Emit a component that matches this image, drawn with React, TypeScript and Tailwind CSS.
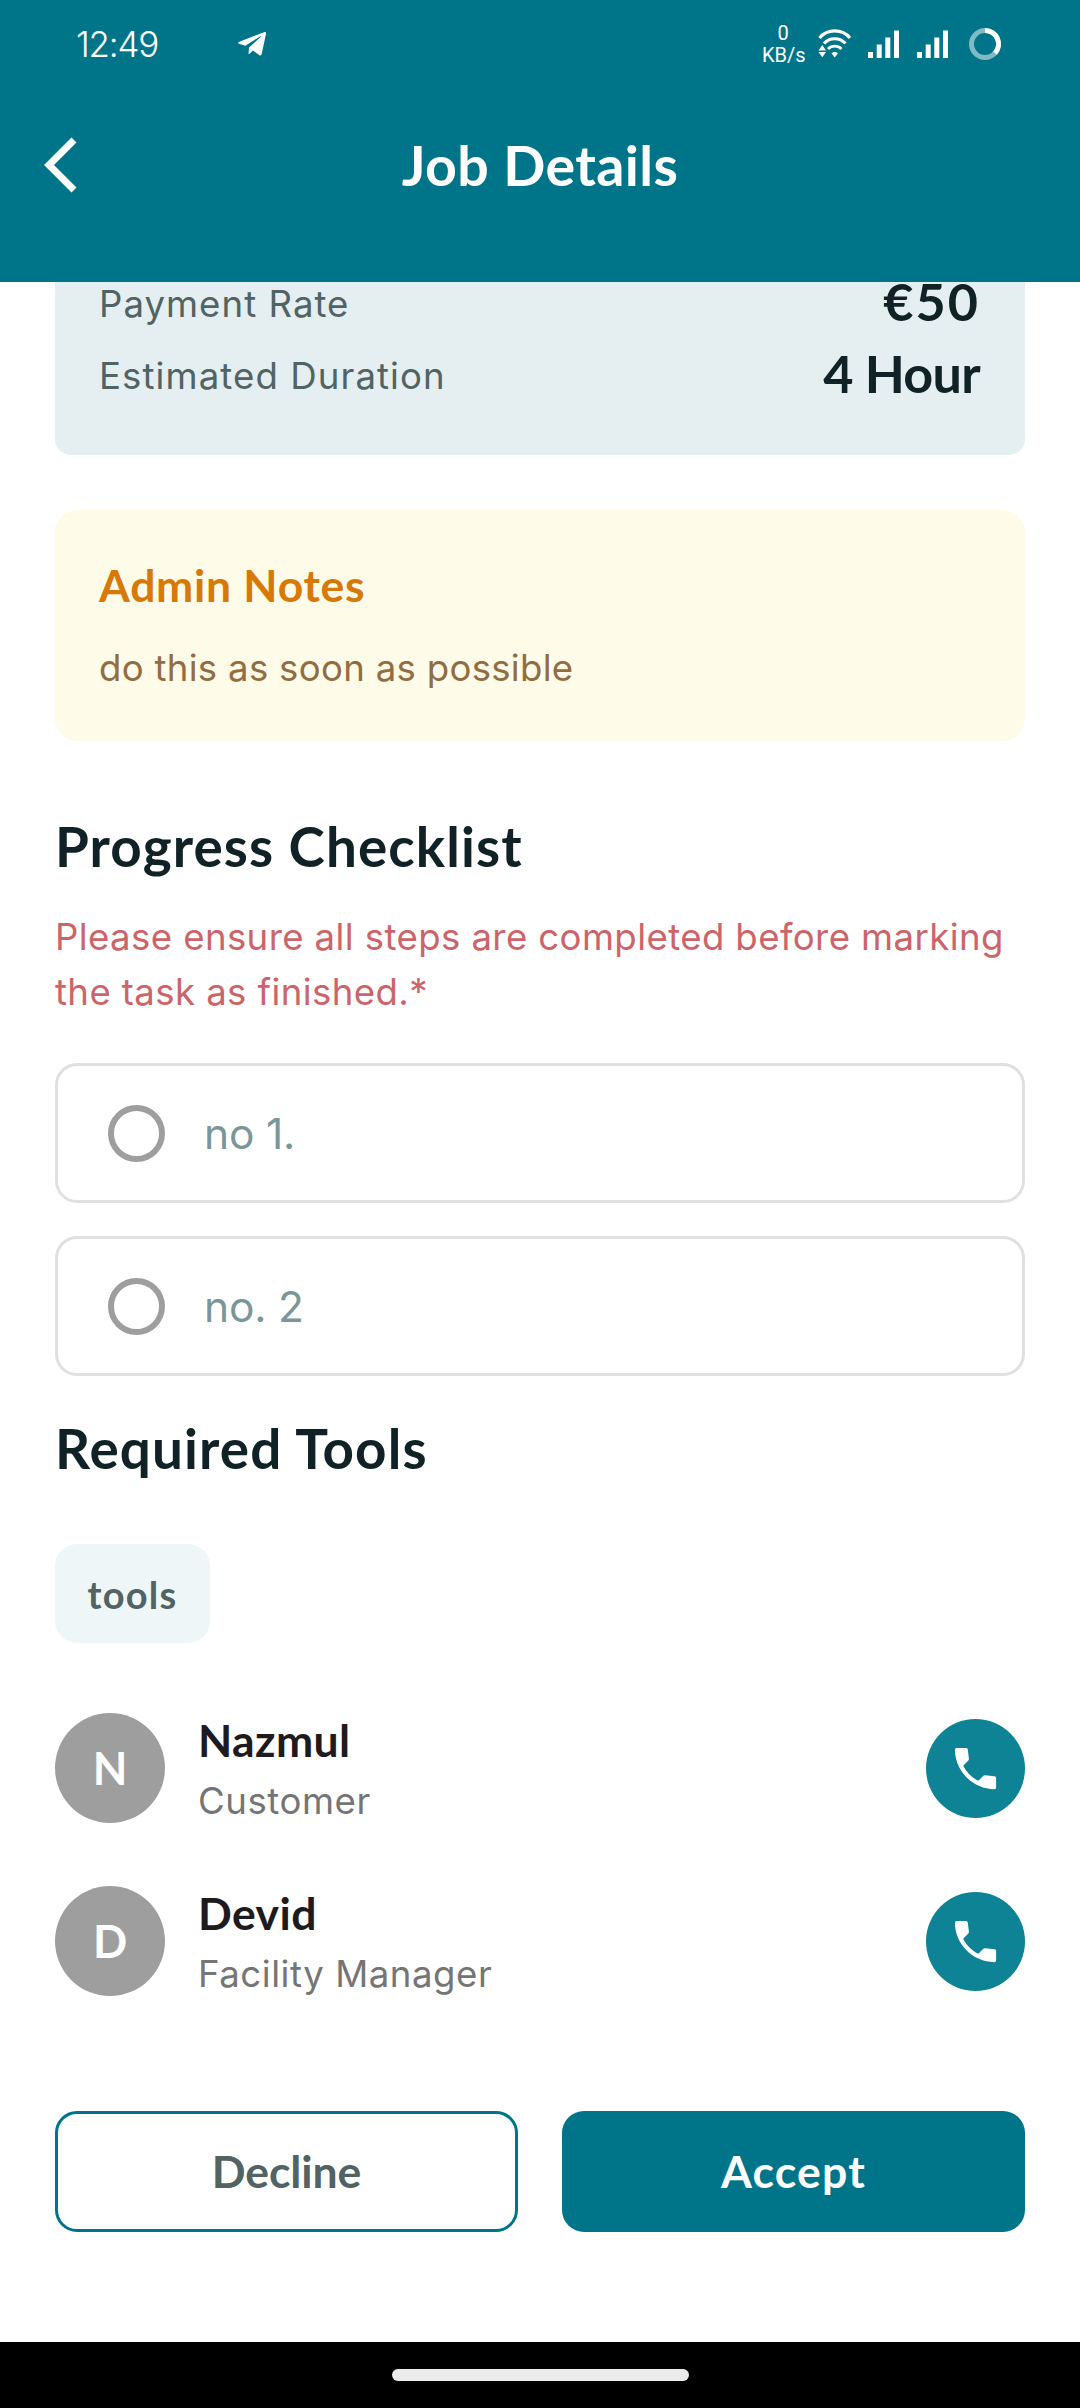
import React from "react";
import { FaTelegramPlane } from "react-icons/fa";

const display = "font-['Lato',sans-serif] font-bold";
const body = "font-['Inter',sans-serif] font-normal";

function WifiIcon() {
  return (
    <svg width="34" height="30" viewBox="0 0 34 30" fill="none" stroke="white" strokeWidth="3.2">
      <path d="M1.5 9 A20 20 0 0 1 32 9" />
      <path d="M6 14.5 A14.5 14.5 0 0 1 27.5 14.5" />
      <path d="M10 20 A9.5 9.5 0 0 1 23.5 20" strokeWidth="2.8" />
      <path d="M13.5 24.3 Q16.7 21.5 20 24.3 L16.7 28.5 Z" fill="white" stroke="none" />
      <path d="M0.5 21.5 L4.3 16 L8 21.5 Z M0.5 23 L4.3 28.3 L8 23 Z" fill="white" stroke="none" />
    </svg>
  );
}

function SignalIcon() {
  return (
    <svg width="32" height="28" viewBox="0 0 32 28" fill="white">
      <rect x="0" y="22" width="5" height="6" />
      <rect x="8.7" y="14.5" width="5" height="13.5" />
      <rect x="17.3" y="7.5" width="5" height="20.5" />
      <rect x="26" y="0.5" width="5" height="27.5" />
    </svg>
  );
}

function BatteryRing() {
  return (
    <svg width="34" height="34" viewBox="-17 -17 34 34" fill="none" strokeWidth="5">
      <circle r="13.5" stroke="white" strokeOpacity="0.5" />
      <path d="M0 -13.5 A13.5 13.5 0 0 1 10 9.1" stroke="white" />
    </svg>
  );
}

function StatusBar() {
  return (
    <div className="flex h-[88px] items-center">
      <span className="ml-[76px] w-[160px] font-['Inter',sans-serif] text-[35px] font-light leading-[90px] tracking-[-1.2px]">12:49</span>
      <FaTelegramPlane className="size-8" />
      <div className="mr-[78px] ml-auto flex items-center">
        <div className="mr-3.5 w-[42px] text-center font-['Roboto',sans-serif] text-[20px] leading-[22px]">
          <div>0</div>
          <div className="whitespace-nowrap">KB/s</div>
        </div>
        <WifiIcon />
        <div className="ml-4 flex gap-[17px]">
          <SignalIcon />
          <SignalIcon />
        </div>
        <div className="ml-[19px]">
          <BatteryRing />
        </div>
      </div>
    </div>
  );
}

function Header() {
  return (
    <header className="h-[282px] bg-[#007589] text-white">
      <StatusBar />
      <div className="grid h-[154px] grid-cols-[1fr_auto_1fr] items-center">
        <svg className="ml-11" width="34" height="56" viewBox="0 0 34 56" fill="none" stroke="white" strokeWidth="7">
          <path d="M30 3 L5 28 L30 53" />
        </svg>
        <h1 className={`${display} text-[55.5px] leading-[62px] tracking-[0.4px]`}>Job Details</h1>
      </div>
    </header>
  );
}

function RateCard() {
  return (
    <section className="h-[173px] rounded-b-[16px] bg-[#e5eef1] pr-[45px] pl-11 text-[#526363]">
      <div className="flex h-14 items-start justify-between">
        <span className={`${body} text-[36.6px] leading-[45px] tracking-[1.04px]`}>Payment Rate</span>
        <span className={`${display} text-[52.1px] leading-[38px] tracking-[2px] text-[#102226]`}>€50</span>
      </div>
      <div className="flex items-start justify-between">
        <span className={`${body} text-[36.6px] leading-[77px] tracking-[1.1px]`}>Estimated Duration</span>
        <span className={`${display} text-[52.1px] leading-[71px] tracking-[-0.7px] text-[#102226]`}>4 Hour</span>
      </div>
    </section>
  );
}

function AdminNotes() {
  return (
    <section className="mt-[55px] h-[231px] rounded-[22px] bg-[#fffbe9] pt-[46px] pl-11">
      <h2 className={`${display} text-[44.5px] leading-[58px] tracking-[0.7px] text-[#d77907]`}>Admin Notes</h2>
      <p className={`${body} mt-6 text-[36.6px] leading-[60px] tracking-[0.3px] text-[#926d42]`}>do this as soon as possible</p>
    </section>
  );
}

function ChecklistItem({ label }: { label: string }) {
  return (
    <label className="flex h-[140px] items-center rounded-[22px] border-[3px] border-[#e0e0e0] pl-[50px]">
      <span className="size-[57px] rounded-full border-[6px] border-[#9e9e9e]" />
      <span className={`${body} ml-[39px] pt-px text-[42.5px] leading-[60px] tracking-[-0.2px] text-[#7b9699]`}>{label}</span>
    </label>
  );
}

function PhoneIcon() {
  return (
    <svg width="55" height="55" viewBox="0 0 24 24" fill="white">
      <path d="M20.3 15.38l-4.1-.48q-.45-.05-.75.25l-2.24 2.22c-2.83-1.44-5.15-3.75-6.59-6.59l2.25-2.25q.3-.3.25-.75l-.48-4.1Q8.56 3 7.9 3H3.75Q3 3 3.01 3.75C3.03 13.2 10.8 20.97 20.25 21q.75 0 .75-.75v-4.1q0-.7-.7-.77z" />
    </svg>
  );
}

function Contact({ name, role }: { name: string; role: string }) {
  return (
    <div className="flex h-[110px] items-center">
      <div className={`${display} flex size-[110px] items-center justify-center rounded-full bg-[#9e9e9e] pt-0.5 text-[45px] text-white`}>{name[0]}</div>
      <div className="ml-[33px] pt-2">
        <div className={`${display} text-[44.5px] leading-[58px] tracking-[0.4px] text-[#1d1b20]`}>{name}</div>
        <div className={`${body} text-[36.6px] leading-[64px] tracking-[0.55px] text-[#757575]`}>{role}</div>
      </div>
      <button className="ml-auto flex size-[99px] items-center justify-center rounded-full bg-[#0d8395]">
        <PhoneIcon />
      </button>
    </div>
  );
}

export default function App() {
  return (
    <div className="flex h-[2408px] w-[1080px] flex-col overflow-hidden bg-white">
      <Header />
      <main className="flex flex-1 flex-col px-[55px]">
        <RateCard />
        <AdminNotes />
        <h2 className={`${display} mt-[75px] text-[54.8px] leading-[60px] tracking-[1.1px] text-[#102226]`}>Progress Checklist</h2>
        <p className={`${body} mt-[34px] text-[36.6px] leading-[55px] tracking-[0.4px] text-[#cd6469]`}>
          Please ensure all steps are completed before marking the task as finished.*
        </p>
        <div className="mt-[43px] flex flex-col gap-[33px]">
          <ChecklistItem label="no 1." />
          <ChecklistItem label="no. 2" />
        </div>
        <h2 className={`${display} mt-[42px] text-[54.8px] leading-[60px] tracking-[1.1px] text-[#102226]`}>Required Tools</h2>
        <div className="mt-[66px] flex">
          <span className={`${display} flex h-[99px] w-[155px] items-center justify-center rounded-[22px] bg-[#eff6f8] pt-px text-[38px] tracking-[1.2px] text-[#526363]`}>tools</span>
        </div>
        <div className="mt-[70px] flex flex-col gap-[63px]">
          <Contact name="Nazmul" role="Customer" />
          <Contact name="Devid" role="Facility Manager" />
        </div>
        <div className={`${display} mt-[115px] grid h-[121px] grid-cols-2 gap-11 text-[44.5px]`}>
          <button className="rounded-[22px] border-[3px] border-[#007589] tracking-[-0.1px] text-[#526363]">Decline</button>
          <button className="rounded-[22px] bg-[#007589] tracking-[1.2px] text-white">Accept</button>
        </div>
      </main>
      <footer className="flex h-[66px] items-center justify-center bg-black">
        <div className="h-3 w-[297px] rounded-full bg-[#ebebeb]" />
      </footer>
    </div>
  );
}
